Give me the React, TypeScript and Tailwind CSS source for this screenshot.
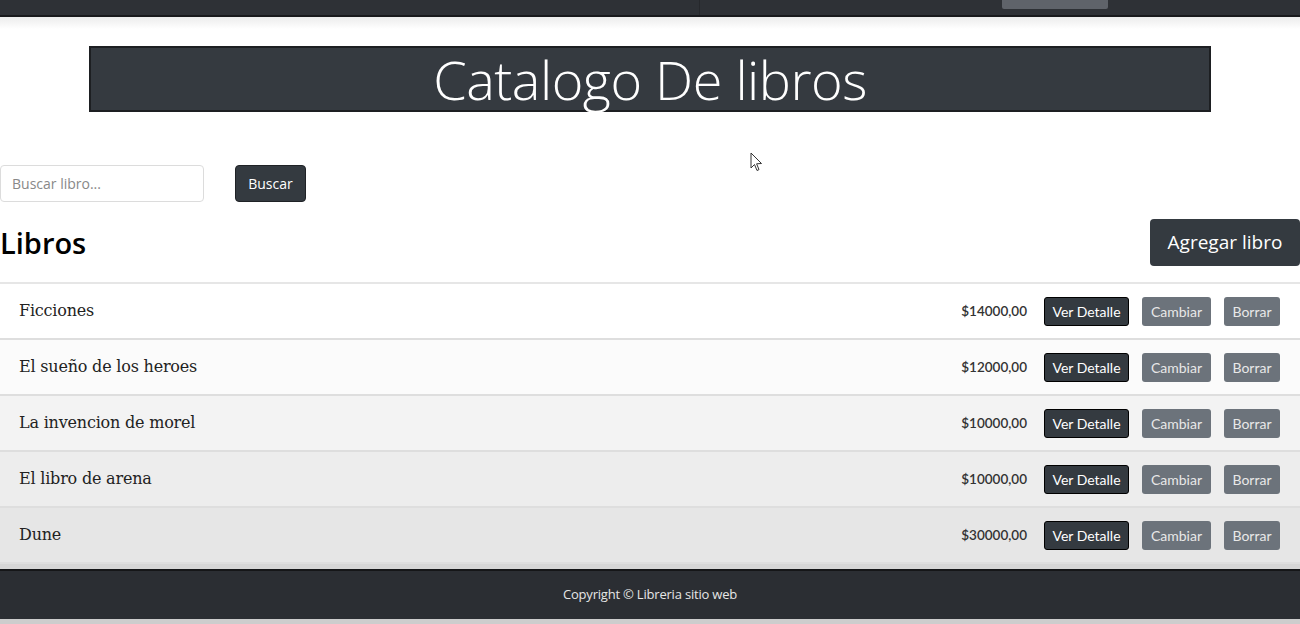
const books = [
  { title: 'Ficciones', price: '$14000,00', bg: 'bg-white' },
  { title: 'El sueño de los heroes', price: '$12000,00', bg: 'bg-[#fbfbfb]' },
  { title: 'La invencion de morel', price: '$10000,00', bg: 'bg-[#f3f3f3]' },
  { title: 'El libro de arena', price: '$10000,00', bg: 'bg-[#ededed]' },
  { title: 'Dune', price: '$30000,00', bg: 'bg-[#e6e6e6]' },
];

function BookRow({ title, price, bg }: { title: string; price: string; bg: string }) {
  return (
    <div className={`flex h-[56px] items-center border-b-2 border-[#dedede] pl-[19px] pr-[20px] ${bg}`}>
      <span className="flex-1 font-['DejaVu_Serif',serif] text-[16px] tracking-[-0.2px] text-[#222]">
        {title}
      </span>
      <span className="mr-[17px] font-['Lato',sans-serif] text-[13.5px] font-semibold text-[#333]">{price}</span>
      <button className="mr-[13px] h-[29px] w-[85px] rounded-[3px] border border-black bg-[#343a40] font-['Lato',sans-serif] text-[14px] text-white">
        Ver Detalle
      </button>
      <button className="mr-[13px] h-[29px] w-[69px] rounded-[3px] bg-[#6c737b] font-['Lato',sans-serif] text-[14px] text-[#e8e8e8]">
        Cambiar
      </button>
      <button className="h-[29px] w-[56px] rounded-[3px] bg-[#6c737b] font-['Lato',sans-serif] text-[14px] text-[#e8e8e8]">
        Borrar
      </button>
    </div>
  );
}

export default function App() {
  return (
    <div className="relative flex h-[624px] w-[1300px] flex-col overflow-hidden bg-white font-['Open_Sans',sans-serif]">
      {/* top navbar, cut off */}
      <div className="flex h-[17px] shrink-0 border-b-2 border-[#18191c] bg-[#2e3136]">
        <div className="w-[700px] border-r border-[#26282c]" />
        <div className="flex flex-1 items-start pl-[302px]">
          <div className="h-[9px] w-[106px] rounded-b-[2px] bg-[#5f636a]" />
        </div>
      </div>

      <div className="h-[12px] shrink-0 bg-gradient-to-b from-[#ececec] to-white" />

      {/* title */}
      <div className="mx-[89px] mt-[17px] flex h-[66px] items-center justify-center border-2 border-[#1d1f22] bg-[#353a40]">
        <h1 className="font-['Open_Sans',sans-serif] text-[54px] font-light leading-none tracking-[-0.5px] text-white">
          Catalogo De libros
        </h1>
      </div>

      {/* search */}
      <div className="mt-[53px] flex items-center gap-[31px]">
        <input
          placeholder="Buscar libro..."
          className="h-[37px] w-[204px] rounded-[4px] border border-[#dcdcdc] px-[11px] text-[14px] text-[#333] outline-none placeholder:text-[#888]"
        />
        <button className="h-[37px] w-[71px] rounded-[4px] border border-[#1f2226] bg-[#343a40] text-[14px] font-medium text-white">
          Buscar
        </button>
      </div>

      {/* header */}
      <div className="mt-[17px] flex items-center justify-between">
        <h2 className="text-[29px] font-semibold leading-none text-black">Libros</h2>
        <button className="h-[47px] w-[150px] rounded-[4px] bg-[#343a40] text-[19px] text-white">
          Agregar libro
        </button>
      </div>

      {/* list */}
      <div className="mt-[16px] border-t-2 border-[#e6e6e6]">
        {books.map((b) => (
          <BookRow key={b.title} {...b} />
        ))}
      </div>

      <div className="h-[5px] bg-[#d6d6d6]" />

      {/* footer */}
      <footer className="flex h-[50px] items-center justify-center border-t-2 border-[#151618] bg-[#2b2e33]">
        <span className="text-[13px] tracking-[-0.2px] text-[#e6e6e6]">Copyright © Libreria sitio web</span>
      </footer>
      <div className="flex-1 bg-[#cdcdcd]" />

      {/* mouse cursor */}
      <svg className="absolute left-[750px] top-[152px]" width="13" height="20" viewBox="0 0 13 20">
        <path d="M1 1 L1 16 L4.5 12.5 L7 18.5 L9 17.6 L6.6 11.8 L11.5 11.5 Z" fill="white" stroke="#333" strokeWidth="1" />
      </svg>
    </div>
  );
}
